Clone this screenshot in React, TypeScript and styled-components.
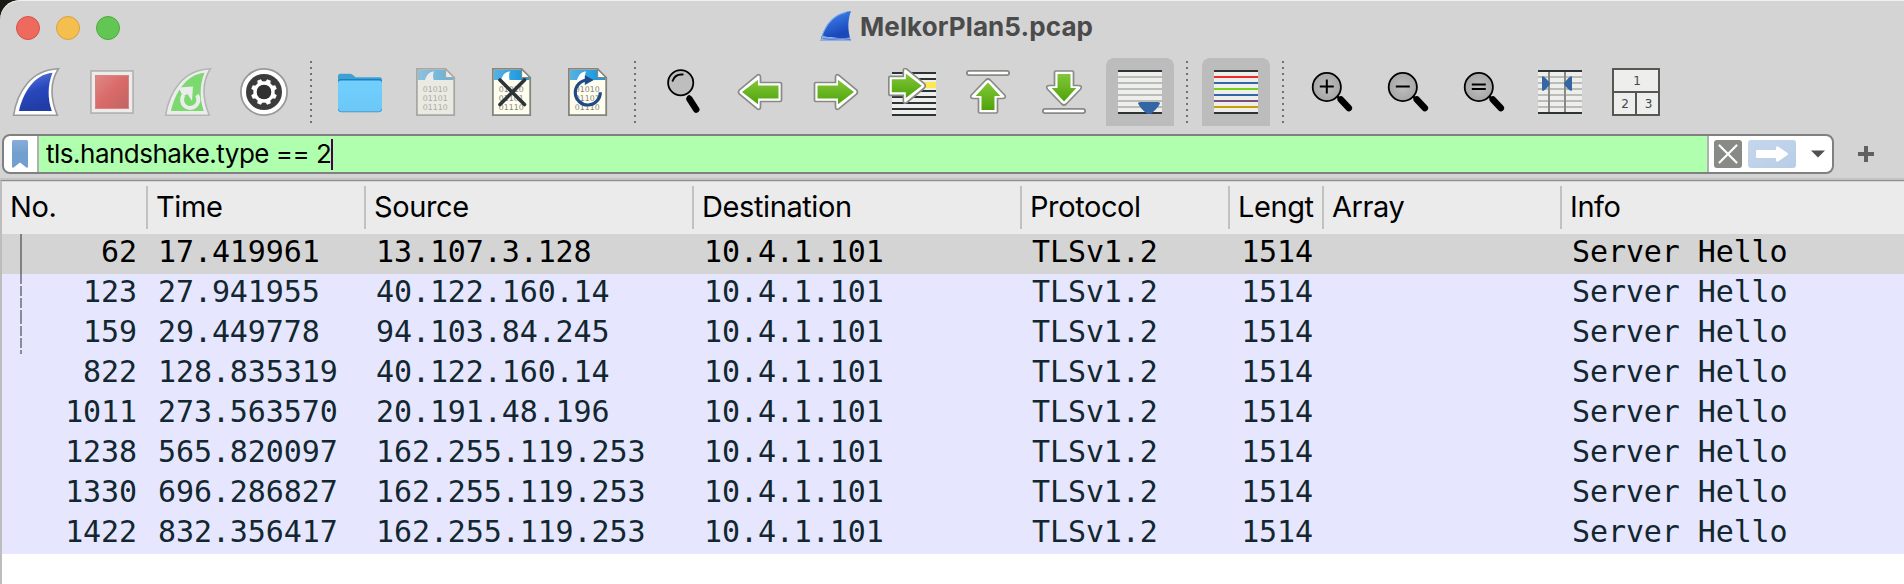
import React from "react";
import styled, { createGlobalStyle, css } from "styled-components";

const Global = createGlobalStyle`
  *, *::before, *::after { box-sizing: border-box; }
  html, body { margin: 0; padding: 0; background: #1a1c14; }
  svg { display: block; flex: none; }
`;

const Window = styled.main`
  width: 1904px;
  height: 584px;
  overflow: hidden;
  display: flex;
  flex-direction: column;
  background: #d4d4d4;
  border-top-left-radius: 20px;
  box-shadow: inset 0 1px 0 #f0f0f0;
  font-family: Inter, "Liberation Sans", sans-serif;
`;

const TitleBar = styled.header`
  height: 58px;
  flex: none;
  display: grid;
  grid-template-columns: 820px 1fr;
`;

const Lights = styled.div`
  display: flex;
  gap: 16px;
  padding: 16px 0 0 16px;
`;

const Light = styled.span<{ $fill: string; $edge: string }>`
  width: 24px;
  height: 24px;
  border-radius: 50%;
  background: ${(p) => p.$fill};
  border: 1px solid ${(p) => p.$edge};
`;

const Title = styled.div`
  display: flex;
  align-items: flex-start;
  gap: 8px;
  padding-top: 11px;
`;

const TitleText = styled.h1`
  margin: 0;
  font-size: 26px;
  line-height: 32px;
  font-weight: 700;
  letter-spacing: 0.1px;
  color: #4b4b4b;
  white-space: nowrap;
`;

const Toolbar = styled.div`
  height: 68px;
  flex: none;
  display: flex;
  align-items: center;
  gap: 8px;
  padding-left: 2px;
`;

const ToolButton = styled.button<{ $active?: boolean }>`
  width: 68px;
  height: 68px;
  padding: 0;
  border: 0;
  display: flex;
  align-items: center;
  justify-content: center;
  border-radius: 8px 8px 0 0;
  background: ${(p) => (p.$active ? "#bcbcbc" : "transparent")};
`;

const Divider = styled.span`
  width: 12px;
  height: 62px;
  background: repeating-linear-gradient(to bottom, #727272 0 2px, transparent 2px 6px) 4px 0 / 2px 100% no-repeat;
`;

const FilterBar = styled.div`
  height: 54px;
  flex: none;
  display: flex;
  align-items: flex-start;
  padding: 8px 0 0 2px;
  border-bottom: 2px solid #c3c3c3;
`;

const FilterField = styled.div`
  width: 1832px;
  height: 40px;
  display: flex;
  border: 2px solid #808080;
  border-radius: 8px;
  overflow: hidden;
  background: #fff;
`;

const BookmarkSlot = styled.div`
  width: 35px;
  display: flex;
  align-items: center;
  padding-left: 8px;
  border-right: 2px solid #b2b0b2;
`;

const FilterText = styled.div`
  flex: 1;
  display: flex;
  align-items: center;
  padding-left: 7px;
  background: #afffaf;
  color: #000;
  font-size: 26px;
  line-height: 36px;
  letter-spacing: -0.5px;
  white-space: pre;
`;

const Caret = styled.i`
  width: 2px;
  height: 31px;
  background: #4b004b;
`;

const FilterActions = styled.div`
  width: 125px;
  display: flex;
  align-items: center;
  gap: 6px;
  padding-left: 5px;
  border-left: 2px solid #b2b0b2;
`;

const AddButton = styled.div`
  padding: 12px 0 0 24px;
`;

const Table = styled.section`
  flex: 1;
  display: flex;
  flex-direction: column;
  border-top: 1px solid #8d8d8d;
  border-left: 2px solid #bdbdbd;
  background: #fff;
`;

const columns = css`
  display: grid;
  grid-template-columns: 146px 218px 328px 328px 208px 94px 238px 1fr;
`;

const HeaderRow = styled.div`
  ${columns}
  height: 53px;
  flex: none;
  padding: 4px 0 5px;
  background: #ebebeb;
  border-top: 1px solid #d6d6d6;
`;

const HeaderCell = styled.div`
  display: flex;
  border-right: 2px solid #c1c1c1;
  padding: 0 7px 0 8px;
  font-size: 29px;
  line-height: 41px;
  letter-spacing: -0.4px;
  color: #000;
  white-space: nowrap;
  overflow: hidden;
  &:last-child { border-right: 0; }
`;

const HeaderLabel = styled.span`
  overflow: hidden;
`;

const Row = styled.div<{ $selected?: boolean }>`
  ${columns}
  height: 40px;
  flex: none;
  background: ${(p) => (p.$selected ? "#d4d4d4" : "#e6e6ff")};
  color: ${(p) => (p.$selected ? "#000" : "#12272e")};
`;

const Cell = styled.div<{ $right?: boolean }>`
  display: flex;
  justify-content: ${(p) => (p.$right ? "flex-end" : "flex-start")};
  padding: 0 ${(p) => (p.$right ? 11 : 0)}px 0 ${(p) => (p.$right ? 0 : 10)}px;
  font-family: "DejaVu Sans Mono", monospace;
  font-size: 30px;
  line-height: 36px;
  letter-spacing: -0.1px;
  white-space: nowrap;
`;

const NumberCell = styled(Cell)`
  justify-content: space-between;
  padding-left: 18px;
`;

const FIN = "M1.6 47.3C5 25 18 2 46.4.8 38 14 38.6 31 45.3 47.3Z";
const FIN_INNER = "M7 43C11 25 22 6.500 40.500 4.800 35.500 17 35.500 31 39.800 43Z";

const Icon = ({ children }: { children: React.ReactNode }) => (
  <svg width="48" height="48" viewBox="0 0 48 48">{children}</svg>
);

const StartIcon = () => (
  <Icon>
    <linearGradient id="finBlue" x1="0" y1="0" x2="0.3" y2="1">
      <stop offset="0" stopColor="#6480dc" />
      <stop offset="0.55" stopColor="#2848bd" />
      <stop offset="1" stopColor="#203ca6" />
    </linearGradient>
    <path d={FIN} fill="#fff" stroke="#9a9a9a" strokeWidth="1.6" />
    <path d={FIN_INNER} fill="url(#finBlue)" />
  </Icon>
);

const StopIcon = () => (
  <Icon>
    <linearGradient id="stopRed" x1="0" y1="0" x2="1" y2="1">
      <stop offset="0" stopColor="#df8884" />
      <stop offset="0.5" stopColor="#d96a69" />
      <stop offset="1" stopColor="#c06464" />
    </linearGradient>
    <rect x="2.900" y="2.900" width="42.200" height="42.200" fill="#ececec" stroke="#b5b5b5" strokeWidth="1.800" />
    <rect x="7.500" y="7.500" width="33" height="33" fill="url(#stopRed)" stroke="#d98280" />
  </Icon>
);

const RestartIcon = () => (
  <Icon>
    <path d={FIN} fill="#ececec" stroke="#b5b5b5" strokeWidth="1.600" />
    <path d={FIN_INNER} fill="#7bd96f" />
    <path d="M19.400 27.200a8.200 8.200 0 1 0 13.500-.2" fill="none" stroke="#ececec" strokeWidth="4" />
    <path d="M14.500 19.500 29 18.500 28 33 23.500 26 19 28.500Z" fill="#ececec" />
  </Icon>
);

const OptionsIcon = () => (
  <Icon>
    <circle cx="24" cy="24" r="23.100" fill="#fff" stroke="#999" strokeWidth="1.800" />
    <circle cx="24" cy="24" r="18" fill="#3c3c3c" />
    <circle cx="24" cy="24" r="8.900" fill="none" stroke="#fff" strokeWidth="3.600" />
    {[22.5, 67.5, 112.5, 157.5, 202.5, 247.5, 292.5, 337.5].map((a) => (
      <path key={a} d="M21.300 14.500 22 11h4l.7 3.500Z" fill="#fff" transform={`rotate(${a} 24 24)`} />
    ))}
    <circle cx="24" cy="24" r="7.300" fill="#303030" />
  </Icon>
);

const FolderIcon = () => (
  <Icon>
    <linearGradient id="folder" x1="0" y1="0" x2="0" y2="1">
      <stop offset="0" stopColor="#73cefb" />
      <stop offset="1" stopColor="#6ac8f8" />
    </linearGradient>
    <path d="M2 42V8q0-2.200 2.200-2.200h9.600q1.600 0 2.800 1l3 2.500h24Q46 9.300 46 12v30Z" fill="#3fa0d4" />
    <path d="M2 14q0-3 3-3h38q3 0 3 3v4H2Z" fill="#1383c4" />
    <rect x="2" y="12.500" width="44" height="31.500" rx="2.600" fill="url(#folder)" />
    <path d="M2.300 41.200q.3 2.600 3 2.600h37.400q2.700 0 3-2.600" fill="none" stroke="#4c93b9" strokeWidth=".9" />
  </Icon>
);

const Page = ({ id, children }: { id: string; children?: React.ReactNode }) => (
  <>
    <linearGradient id={id} x1="0" y1="0" x2="1" y2="0">
      <stop offset="0" stopColor="#58b2e2" />
      <stop offset="1" stopColor="#1b9ae0" />
    </linearGradient>
    <path d="M4.900.9H33.500L42.200 9.600V47.100H4.900Z" fill="#fefdee" />
    <path d="M6 2H33V12H6Z" fill={`url(#${id})`} />
    <path d="M33 9H41.500V12H33Z" fill="#1b9ae0" />
    <path d="M13 12C14.500 7 17 4 22 3.200 20.800 6 20.900 9 21.600 12Z" fill="#fff" />
    <path d="M4.900.9H33.500L42.200 9.600V47.100H4.900Z" fill="none" stroke="#84857d" strokeWidth="1.800" />
    <path d="M33.500 1V9.600H42Z" fill="#fff" stroke="#84857d" strokeWidth="1.300" />
    <g fill="#85867f" fontFamily="DejaVu Sans" fontSize="7.800">
      <text x="10.700" y="24" textLength="25">01010</text>
      <text x="10.700" y="33" textLength="25">01101</text>
      <text x="10.700" y="42" textLength="25">01110</text>
    </g>
    {children}
  </>
);

const SaveIcon = () => (
  <Icon><g opacity=".55"><Page id="pageSave" /></g></Icon>
);

const CloseIcon = () => (
  <Icon>
    <Page id="pageClose">
      <path d="M12 12 36.500 36.500M36.500 12 12 36.500" stroke="#2d3437" strokeWidth="3.600" strokeLinecap="round" />
    </Page>
  </Icon>
);

const ReloadIcon = () => (
  <Icon>
    <Page id="pageReload">
      <path d="M36.300 24.300A12.500 12.500 0 1 1 23.500 12" fill="none" stroke="#204a87" strokeWidth="3.200" />
      <path d="M20.800 7.200 29.800 12 20.800 17Z" fill="#204a87" />
    </Page>
  </Icon>
);

const FindIcon = () => (
  <Icon>
    <g transform="translate(3.700 -.5)">
      <path d="M24.500 28 34.500 42.500" stroke="#000" strokeWidth="3" />
      <path d="M25.800 31.500 32.500 42" stroke="#000" strokeWidth="6.500" strokeLinecap="round" />
      <circle cx="17" cy="15.300" r="12.600" fill="#bebebe" stroke="#000" strokeWidth="1.800" />
      <path d="M9 13.200C10.500 8.600 14.500 6.600 19 7" fill="none" stroke="#000" strokeWidth="2" strokeLinecap="round" />
    </g>
  </Icon>
);

/* A right-pointing arrow 34 units tall; tail is the x of the shaft's outer end. */
const Arrow = ({ transform, tail = 3 }: { transform?: string; tail?: number }) => (
  <g transform={transform}>
    <path
      d={`M${tail + 1.3} 15H24V10Q24 5.800 27.500 7.800L45 22.300Q47 24.500 45 26.700L27.500 41.200Q24 43.200 24 39V34H${tail + 1.3}Q${tail} 34 ${tail} 32.700V16.300Q${tail} 15 ${tail + 1.3} 15Z`}
      fill="#fff" stroke="#888a85" strokeWidth="1.700" strokeLinejoin="round"
    />
    <path d={`M${tail + 3} 18H26.500V12.200L42.500 24.500 26.500 36.800V31H${tail + 3}Z`} fill="url(#green)" />
  </g>
);

const Green = () => (
  <linearGradient id="green" x1="0" y1="0" x2="0" y2="1">
    <stop offset="0" stopColor="#83c73a" />
    <stop offset="1" stopColor="#4ea309" />
  </linearGradient>
);

const BackIcon = () => (
  <Icon><Green /><Arrow transform="matrix(-1 0 0 1 48.500 -.5)" /></Icon>
);
const ForwardIcon = () => (
  <Icon><Arrow transform="translate(-.5 -.5)" /></Icon>
);

const Stripes = ({ colors }: { colors: string[] }) => (
  <>
    <rect x="2" y="2" width="44" height="44" fill="#eeeeec" />
    {colors.map((c, i) => (
      <rect key={i} x="2" y={2 + i * 6} width="44" height="2" fill={c} />
    ))}
  </>
);

const INK = "#2e3436";
const PALE = "#babdb6";

const GotoIcon = () => (
  <Icon>
    <g transform="translate(2 2)"><Stripes colors={Array(8).fill(INK)} /></g>
    <rect x="30" y="14" width="18" height="6" fill="#fce94f" />
    <Arrow tail={9.5} transform="translate(-8.700 -6.700)" />
  </Icon>
);

const FirstIcon = () => (
  <Icon>
    <rect x="2.900" y="2.900" width="42.200" height="4.200" rx="2.100" fill="#fff" stroke="#888a85" strokeWidth="1.800" />
    <g transform="matrix(0 -1 1 0 -.5 54.500)"><UprightArrow flip /></g>
  </Icon>
);

const LastIcon = () => (
  <Icon>
    <rect x="2.900" y="40.900" width="42.200" height="4.200" rx="2.100" fill="#fff" stroke="#888a85" strokeWidth="1.800" />
    <g transform="matrix(0 1 -1 0 48.500 -6.500)"><UprightArrow /></g>
  </Icon>
);

/* The short-shafted arrow for the vertical icons, shaded along its length. */
function UprightArrow({ flip }: { flip?: boolean }) {
  const id = flip ? "greenUp" : "greenDown";
  return (
    <>
      <linearGradient id={id} x1={flip ? "1" : "0"} y1="0" x2={flip ? "0" : "1"} y2="0">
        <stop offset="0" stopColor="#83c73a" />
        <stop offset="1" stopColor="#4ea309" />
      </linearGradient>
      <path
        d="M10.800 15H24V10Q24 5.800 27.500 7.800L42.500 22.300Q44.500 24.500 42.500 26.700L27.500 41.200Q24 43.200 24 39V34H10.800Q9.500 34 9.500 32.700V16.300Q9.500 15 10.800 15Z"
        fill="#fff" stroke="#888a85" strokeWidth="1.700" strokeLinejoin="round"
      />
      <path d="M12.500 18H26.500V12.200L40 24.500 26.500 36.800V31H12.500Z" fill={`url(#${id})`} />
    </>
  );
}

const ScrollIcon = () => (
  <Icon>
    <Stripes colors={[INK, PALE, PALE, PALE, PALE, PALE, PALE, INK]} />
    <path d="M22 35.500Q22 34 24 34H42Q44 34 44 35.500C42 40 38 43 35.500 45.500Q33 46.500 30.500 45.500C28 43 24 40 22 35.500Z" fill="#3465a4" />
  </Icon>
);

const ColorizeIcon = () => (
  <Icon>
    <Stripes colors={[INK, "#ef2929", "#3465a4", "#73d216", "#3465a4", "#75507b", "#c4a000", INK]} />
  </Icon>
);

const Lens = ({ sign }: { sign: string }) => (
  <Icon>
    <radialGradient id="lens">
      <stop offset="0" stopColor="#bfbfbf" />
      <stop offset="1" stopColor="#a6a6a6" />
    </radialGradient>
    <g transform="translate(3.800 0)">
      <path d="M25 28 30 33" stroke="#000" strokeWidth="2.500" />
      <path d="M29 31.500 37 40" stroke="#000" strokeWidth="6.600" strokeLinecap="round" />
      <circle cx="15" cy="19" r="14.100" fill="url(#lens)" stroke="#000" strokeWidth="1.800" />
      <path d={sign} stroke="#000" strokeWidth="2" fill="none" />
    </g>
  </Icon>
);

const ResizeIcon = () => (
  <Icon>
    <Stripes colors={[INK, PALE, PALE, PALE, PALE, PALE, PALE, INK]} />
    <path d="M13 4V44M29 4V44" stroke="#888a85" strokeWidth="2" />
    <path d="M6 9Q6 8 7.500 8.500C10 10 12 13 13.700 14.500V16.500C12 19 10 21.500 7.500 22.700 6 23 6 22.500 6 21.500ZM36 9Q36 8 34.500 8.500C32 10 30 13 28.300 14.500V16.500C30 19 32 21.500 34.500 22.700 36 23 36 22.500 36 21.500Z" fill="#3465a4" />
  </Icon>
);

const LayoutIcon = () => (
  <Icon>
    <path d="M1 1H47V47H1ZM1 24H47M24 24V47" fill="#eeeeec" stroke="#555753" strokeWidth="2" />
    <g fill="#44474a" fontFamily="DejaVu Sans" fontSize="12" textAnchor="middle">
      <text x="25" y="17">1</text>
      <text x="13" y="40">2</text>
      <text x="36.500" y="40">3</text>
    </g>
  </Icon>
);

const TitleFin = () => (
  <svg width="32" height="32" viewBox="0 0 32 32">
    <linearGradient id="titleFin" x1=".2" y1="0" x2="0.6" y2="1">
      <stop offset="0" stopColor="#3f8af0" />
      <stop offset="0.8" stopColor="#1c48bb" />
    </linearGradient>
    <path d="M.5 30C4 15 13 1.500 31 .3 27.500 9 27.500 20 31 30Z" fill="url(#titleFin)" />
    <path d="M.5 30C1.200 27.500 2 25.800 3 24.500 8 27 10 25.500 15 26.500S25 27 30 26.500L31 30Z" fill="#8fb0e6" />
    <path d="M3 27.500Q10 29 16 28T30 28.500" stroke="#3b69c4" strokeWidth=".8" fill="none" />
    <path d="M2 25C6 14 14 3.500 26 1.500" stroke="#7fb4f5" strokeWidth=".9" fill="none" />
  </svg>
);

type Tool = { icon: React.ReactNode; active?: boolean };

const TOOLS: Tool[][] = [
  [{ icon: <StartIcon /> }, { icon: <StopIcon /> }, { icon: <RestartIcon /> }, { icon: <OptionsIcon /> }],
  [{ icon: <FolderIcon /> }, { icon: <SaveIcon /> }, { icon: <CloseIcon /> }, { icon: <ReloadIcon /> }],
  [
    { icon: <FindIcon /> },
    { icon: <BackIcon /> },
    { icon: <ForwardIcon /> },
    { icon: <GotoIcon /> },
    { icon: <FirstIcon /> },
    { icon: <LastIcon /> },
    { icon: <ScrollIcon />, active: true },
  ],
  [{ icon: <ColorizeIcon />, active: true }],
  [
    { icon: <Lens sign="M8 18.500H22M15 11.500V25.500" /> },
    { icon: <Lens sign="M8 18.500H22" /> },
    { icon: <Lens sign="M8 16.500H22M8 21H22" /> },
    { icon: <ResizeIcon /> },
    { icon: <LayoutIcon /> },
  ],
];

const HEADERS = ["No.", "Time", "Source", "Destination", "Protocol", "Length", "Array", "Info"];

const PACKETS = [
  ["62", "17.419961", "13.107.3.128"],
  ["123", "27.941955", "40.122.160.14"],
  ["159", "29.449778", "94.103.84.245"],
  ["822", "128.835319", "40.122.160.14"],
  ["1011", "273.563570", "20.191.48.196"],
  ["1238", "565.820097", "162.255.119.253"],
  ["1330", "696.286827", "162.255.119.253"],
  ["1422", "832.356417", "162.255.119.253"],
];

/* Conversation marker: solid through the selected packet, dashed below it. */
const Track = ({ index }: { index: number }) => (
  <svg width="2" height="40" viewBox="0 0 2 40">
    {index === 0 && <path d="M1 0V40" stroke="#808080" strokeWidth="2" />}
    {(index === 1 || index === 2) && (
      <path d="M1 0V10M1 12V22M1 24V34M1 36V40" stroke="#8a8a99" strokeWidth="2" />
    )}
  </svg>
);

export default function App() {
  return (
    <>
      <Global />
      <Window>
        <TitleBar>
          <Lights>
            <Light $fill="#ee6a5f" $edge="#d5524a" />
            <Light $fill="#f5bf4f" $edge="#d9a040" />
            <Light $fill="#62c655" $edge="#51a73e" />
          </Lights>
          <Title>
            <TitleFin />
            <TitleText>MelkorPlan5.pcap</TitleText>
          </Title>
        </TitleBar>
        <Toolbar>
          {TOOLS.map((group, g) => (
            <React.Fragment key={g}>
              {g > 0 && <Divider />}
              {group.map((tool, i) => (
                <ToolButton key={i} $active={tool.active}>{tool.icon}</ToolButton>
              ))}
            </React.Fragment>
          ))}
        </Toolbar>
        <FilterBar>
          <FilterField>
            <BookmarkSlot>
              <svg width="16" height="28" viewBox="0 0 16 28">
                <linearGradient id="bookmark" x1="0" y1="0" x2="0" y2="1">
                  <stop offset="0" stopColor="#86addb" />
                  <stop offset=".5" stopColor="#729fcf" />
                </linearGradient>
                <path d="M0 1.500Q0 0 1.500 0H14.500Q16 0 16 1.500V26.500Q16 28 14.300 27.600L8 22.500 1.700 27.600Q0 28 0 26.500Z" fill="url(#bookmark)" />
              </svg>
            </BookmarkSlot>
            <FilterText>
              tls.handshake.type == 2
              <Caret />
            </FilterText>
            <FilterActions>
              <svg width="28" height="28" viewBox="0 0 28 28">
                <rect width="28" height="28" rx="3" fill="#888a85" />
                <path d="M5.500 5.500 22.500 22.500M22.500 5.500 5.500 22.500" stroke="#fff" strokeWidth="2.200" strokeLinecap="round" />
              </svg>
              <svg width="48" height="28" viewBox="0 0 48 28">
                <linearGradient id="apply" x1="0" y1="0" x2="1" y2="1">
                  <stop offset="0" stopColor="#c6d7ec" />
                  <stop offset="1" stopColor="#b7cde7" />
                </linearGradient>
                <rect width="48" height="28" rx="3" fill="url(#apply)" />
                <path d="M8 11Q8 10 9 10H28V7.500Q28 6 30 6.500L39.500 13Q40.500 14 39.500 15L30 21.500Q28 22 28 20.500V18H9Q8 18 8 17Z" fill="#fff" />
              </svg>
              <svg width="32" height="28" viewBox="0 0 32 28">
                <path d="M9 10.500H23L16 17.500Z" fill="#505050" />
              </svg>
            </FilterActions>
          </FilterField>
          <AddButton>
            <svg width="16" height="16" viewBox="0 0 16 16">
              <path d="M0 8H16M8 0V16" stroke="#606060" strokeWidth="4" />
            </svg>
          </AddButton>
        </FilterBar>
        <Table>
          <HeaderRow>
            {HEADERS.map((h) => (
              <HeaderCell key={h}>
                <HeaderLabel>{h}</HeaderLabel>
              </HeaderCell>
            ))}
          </HeaderRow>
          {PACKETS.map(([no, time, source], i) => (
            <Row key={no} $selected={i === 0}>
              <NumberCell $right>
                <Track index={i} />
                {no}
              </NumberCell>
              <Cell>{time}</Cell>
              <Cell>{source}</Cell>
              <Cell>10.4.1.101</Cell>
              <Cell>TLSv1.2</Cell>
              <Cell $right>1514</Cell>
              <Cell />
              <Cell>Server Hello</Cell>
            </Row>
          ))}
        </Table>
      </Window>
    </>
  );
}
